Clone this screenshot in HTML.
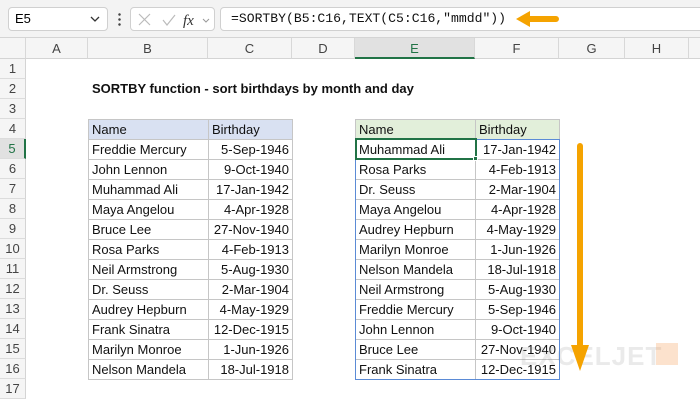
<!DOCTYPE html>
<html><head><style>
*{margin:0;padding:0;box-sizing:border-box}
body{width:700px;height:400px;overflow:hidden;background:#fff;font-family:"Liberation Sans",sans-serif;position:relative}
.a{position:absolute}
.top{left:0;top:0;width:700px;height:38px;background:#f3f3f3;border-bottom:1px solid #d4d4d4}
.box{background:#fff;border:1px solid #d0d0d0;border-radius:4px;height:24px;top:7px}
.colh{top:38px;height:21px;background:#f5f5f5;border-bottom:1px solid #d4d4d4;border-right:1px solid #d8d8d8;font-size:13px;color:#444;text-align:center;line-height:21px}
.rowh{left:0;width:26px;height:20px;background:#f5f5f5;border-bottom:1px solid #dcdcdc;border-right:1px solid #d4d4d4;font-size:13px;color:#444;text-align:center;line-height:20px}
table{position:absolute;border-collapse:collapse;font-size:13px;color:#111}
td{height:20px;border:1px solid #c6c6c6;padding:0 3px;white-space:nowrap;line-height:18px}
td.r{text-align:right}
</style></head><body>
<div class="a top"></div>
<div class="a box" style="left:8px;width:100px"></div>
<div class="a" style="left:15px;top:11px;font-size:13px">E5</div>
<svg class="a" style="left:90px;top:15px" width="10" height="8"><path d="M1 2l4 4 4-4" stroke="#333" fill="none" stroke-width="1.3"/></svg>
<div class="a" style="left:118px;top:12px;width:3px;height:14px;background:radial-gradient(circle,#444 1px,transparent 1.5px) 0 0/3px 5px"></div>
<div class="a box" style="left:130px;width:85px"></div>
<svg class="a" style="left:137px;top:12px" width="80" height="16"><path d="M2 2l11 11M13 2L2 13" stroke="#bbb" fill="none" stroke-width="1.2"/><path d="M26 8l4 5 8-10" stroke="#bbb" fill="none" stroke-width="1.2"/><text x="46" y="13" font-family="Liberation Serif" font-style="italic" font-size="15" fill="#333">fx</text><path d="M66 7l3 3 3-3" stroke="#999" fill="none"/></svg>
<div class="a box" style="left:220px;width:490px"></div>
<div class="a" style="left:231px;top:11px;font-family:'Liberation Mono',monospace;font-size:13.1px;color:#111">=SORTBY(B5:C16,TEXT(C5:C16,"mmdd"))</div>
<svg class="a" style="left:514px;top:10px" width="46" height="18"><path d="M2 9l14-8v5h26a3 3 0 010 6H16v5z" fill="#f5a300"/></svg>

<div class="a colh" style="left:0;width:26px"></div>
<div class="a colh" style="left:26px;width:62px">A</div>
<div class="a colh" style="left:88px;width:120px">B</div>
<div class="a colh" style="left:208px;width:84px">C</div>
<div class="a colh" style="left:292px;width:63px">D</div>
<div class="a colh" style="left:355px;width:120px;background:#e1e1e1;color:#217346;border-bottom:2px solid #217346">E</div>
<div class="a colh" style="left:475px;width:84px">F</div>
<div class="a colh" style="left:559px;width:66px">G</div>
<div class="a colh" style="left:625px;width:64px">H</div>
<div class="a colh" style="left:689px;width:20px"></div>

<div class="a rowh" style="top:59px">1</div>
<div class="a rowh" style="top:79px">2</div>
<div class="a rowh" style="top:99px">3</div>
<div class="a rowh" style="top:119px">4</div>
<div class="a rowh" style="top:139px;background:#e1e1e1;color:#217346;border-right:2px solid #217346">5</div>
<div class="a rowh" style="top:159px">6</div>
<div class="a rowh" style="top:179px">7</div>
<div class="a rowh" style="top:199px">8</div>
<div class="a rowh" style="top:219px">9</div>
<div class="a rowh" style="top:239px">10</div>
<div class="a rowh" style="top:259px">11</div>
<div class="a rowh" style="top:279px">12</div>
<div class="a rowh" style="top:299px">13</div>
<div class="a rowh" style="top:319px">14</div>
<div class="a rowh" style="top:339px">15</div>
<div class="a rowh" style="top:359px">16</div>
<div class="a rowh" style="top:379px">17</div>

<div class="a" style="left:92px;top:81px;font-size:13px;font-weight:bold;color:#111">SORTBY function - sort birthdays by month and day</div>

<table style="left:88px;top:119px">
<col style="width:120px"><col style="width:84px">
<tr style="background:#d9e1f2"><td>Name</td><td>Birthday</td></tr>
<tr><td>Freddie Mercury</td><td class="r">5-Sep-1946</td></tr>
<tr><td>John Lennon</td><td class="r">9-Oct-1940</td></tr>
<tr><td>Muhammad Ali</td><td class="r">17-Jan-1942</td></tr>
<tr><td>Maya Angelou</td><td class="r">4-Apr-1928</td></tr>
<tr><td>Bruce Lee</td><td class="r">27-Nov-1940</td></tr>
<tr><td>Rosa Parks</td><td class="r">4-Feb-1913</td></tr>
<tr><td>Neil Armstrong</td><td class="r">5-Aug-1930</td></tr>
<tr><td>Dr. Seuss</td><td class="r">2-Mar-1904</td></tr>
<tr><td>Audrey Hepburn</td><td class="r">4-May-1929</td></tr>
<tr><td>Frank Sinatra</td><td class="r">12-Dec-1915</td></tr>
<tr><td>Marilyn Monroe</td><td class="r">1-Jun-1926</td></tr>
<tr><td>Nelson Mandela</td><td class="r">18-Jul-1918</td></tr>
</table>

<table style="left:355px;top:119px">
<col style="width:120px"><col style="width:84px">
<tr style="background:#e2efda"><td>Name</td><td>Birthday</td></tr>
<tr><td>Muhammad Ali</td><td class="r">17-Jan-1942</td></tr>
<tr><td>Rosa Parks</td><td class="r">4-Feb-1913</td></tr>
<tr><td>Dr. Seuss</td><td class="r">2-Mar-1904</td></tr>
<tr><td>Maya Angelou</td><td class="r">4-Apr-1928</td></tr>
<tr><td>Audrey Hepburn</td><td class="r">4-May-1929</td></tr>
<tr><td>Marilyn Monroe</td><td class="r">1-Jun-1926</td></tr>
<tr><td>Nelson Mandela</td><td class="r">18-Jul-1918</td></tr>
<tr><td>Neil Armstrong</td><td class="r">5-Aug-1930</td></tr>
<tr><td>Freddie Mercury</td><td class="r">5-Sep-1946</td></tr>
<tr><td>John Lennon</td><td class="r">9-Oct-1940</td></tr>
<tr><td>Bruce Lee</td><td class="r">27-Nov-1940</td></tr>
<tr><td>Frank Sinatra</td><td class="r">12-Dec-1915</td></tr>
</table>
<div class="a" style="left:355px;top:139px;width:205px;height:241px;border:1px solid #5b8bd6;z-index:2"></div>
<div class="a" style="left:355px;top:138px;width:122px;height:22px;border:2px solid #217346;z-index:3"></div>
<div class="a" style="left:473px;top:156px;width:5px;height:5px;background:#217346;border:1px solid #fff;z-index:4"></div>

<div class="a" style="left:520px;top:341px;font-size:26px;font-weight:bold;color:rgba(150,150,150,.2);letter-spacing:1px">EXCELJET</div>
<div class="a" style="left:656px;top:343px;width:22px;height:22px;background:rgba(245,160,90,.3)"></div>
<div class="a" style="left:577px;top:143px;width:6px;height:210px;background:#f5a300;border-radius:3px"></div>
<svg class="a" style="left:571px;top:345px" width="18" height="26"><path d="M0 0h18L9 26z" fill="#f5a300"/></svg>
</body></html>
